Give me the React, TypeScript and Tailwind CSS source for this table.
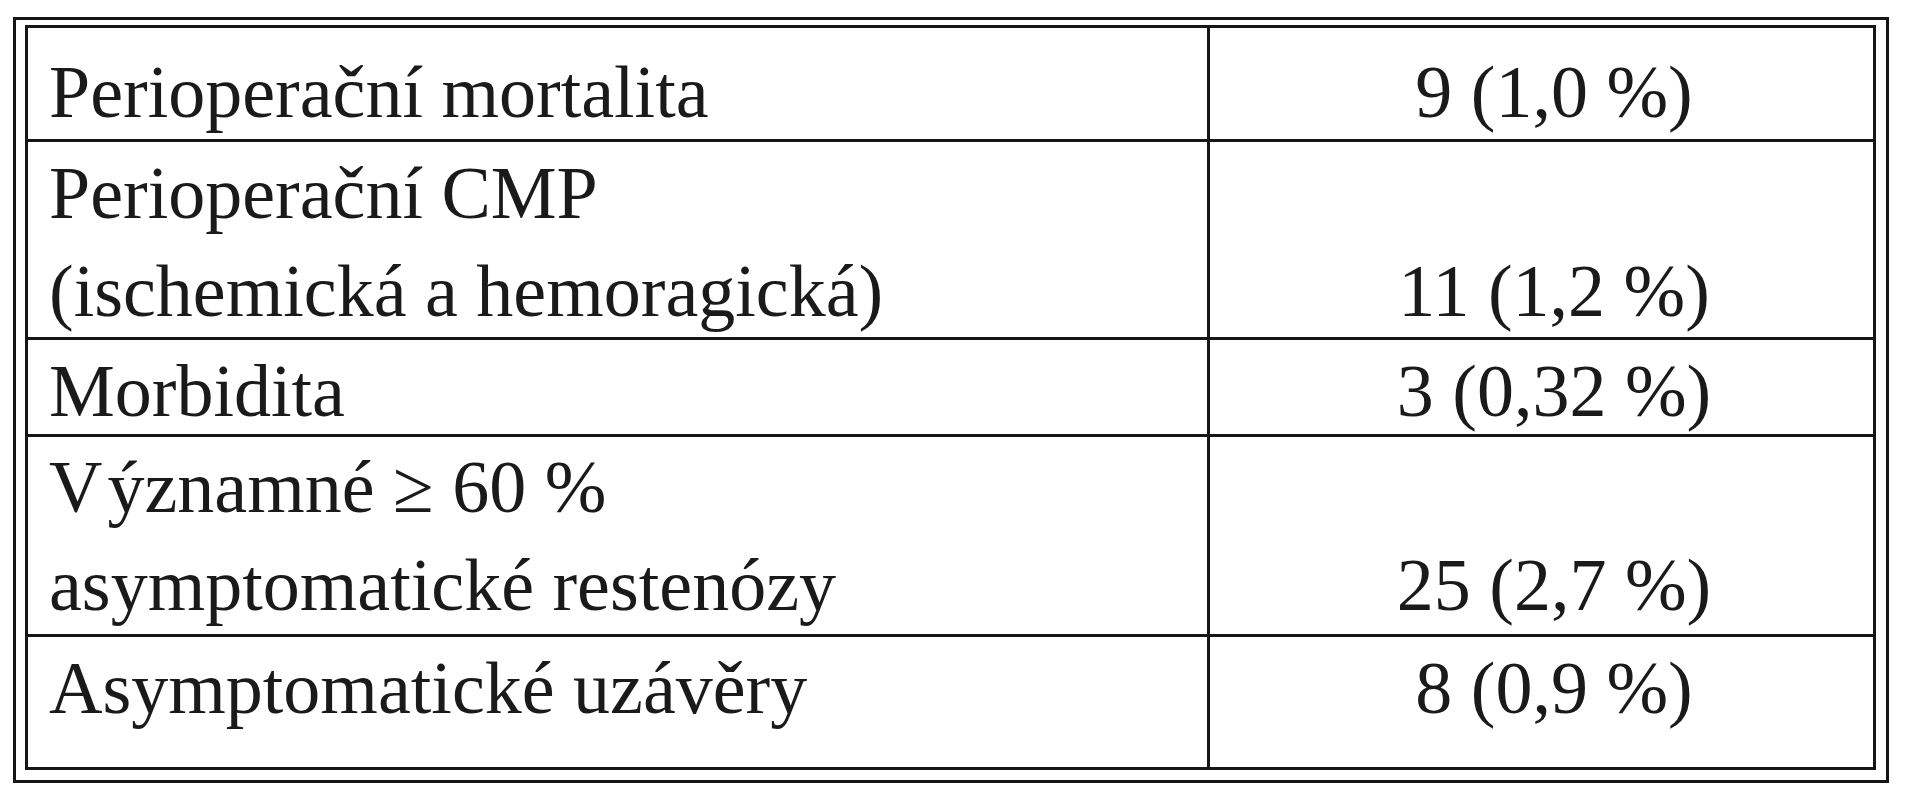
import React from "react";

type Row = { lines: React.ReactNode[]; value: string; h: string; pt: string; last?: boolean };

const rows: Row[] = [
  { lines: ["Perioperační mortalita"], value: "9 (1,0 %)", h: "h-[114px]", pt: "pt-[15px]" },
  { lines: ["Perioperační CMP", "(ischemická a hemoragická)"], value: "11 (1,2 %)", h: "h-[198px]", pt: "pt-[2px]" },
  { lines: ["Morbidita"], value: "3 (0,32 %)", h: "h-[97px]", pt: "pt-[2px]" },
  {
    lines: [
      <>
        <span className="mr-[5px]">V</span>ýznamné ≥ 60 %
      </>,
      "asymptomatické restenózy",
    ],
    value: "25 (2,7 %)",
    h: "h-[200px]",
    pt: "pt-[1px]",
  },
  { lines: ["Asymptomatické uzávěry"], value: "8 (0,9 %)", h: "h-[130px]", pt: "pt-[2px]", last: true },
];

export default function App() {
  return (
    <div className="w-[1913px] h-[800px] bg-white pt-[17px] pl-[13px] font-['Liberation_Serif','Times_New_Roman',serif] text-[74px] leading-[98px] text-[#1a1a1a]">
      <div className="w-[1876px] h-[766px] border-[3px] border-[#161616] pt-[5px] pl-[9px] pr-[10px] pb-[10px]">
        <div className="w-[1851px] h-[745px] border-[3px] border-[#161616] flex flex-col">
          {rows.map((r, i) => (
            <div
              key={i}
              className={`flex shrink-0 ${r.h} ${r.last ? "" : "border-b-[3px] border-[#161616]"}`}
            >
              <div className={`w-[1182px] shrink-0 border-r-[3px] border-[#161616] pl-[21px] ${r.pt} whitespace-nowrap`}>
                {r.lines.map((l, j) => (
                  <div key={j}>{l}</div>
                ))}
              </div>
              <div className={`flex-1 pl-[25px] text-center ${r.pt} whitespace-nowrap`}>
                {r.lines.length > 1 && <div>&nbsp;</div>}
                <div>{r.value}</div>
              </div>
            </div>
          ))}
        </div>
      </div>
    </div>
  );
}
